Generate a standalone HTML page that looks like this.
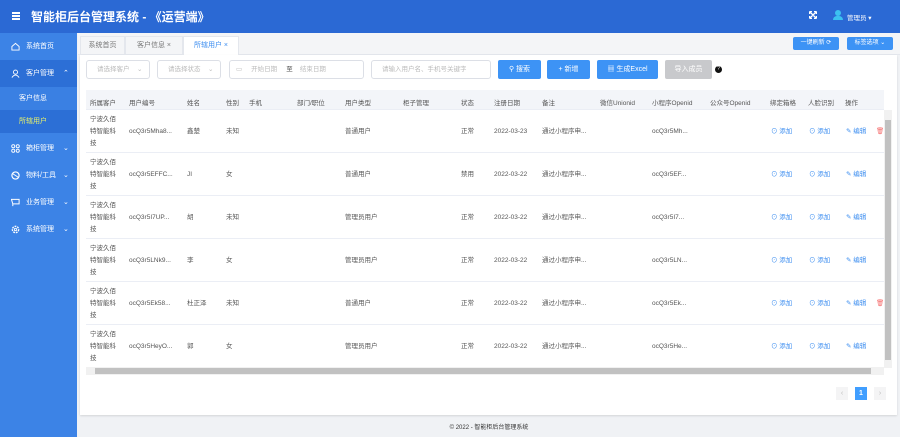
<!DOCTYPE html>
<html><head><meta charset="utf-8"><style>
*{margin:0;padding:0;box-sizing:border-box}
body{width:900px;height:437px;overflow:hidden;background:#f0f2f5;font-family:"Liberation Sans","Noto Sans CJK SC",sans-serif;font-size:7px;color:#555;position:relative}
.a{position:absolute}
.hdr{left:0;top:0;width:900px;height:33px;background:#2b69d4}
.side{left:0;top:33px;width:77px;height:404px;background:#3c83e6}
.si{position:absolute;left:0;width:77px;height:27px;color:#fff;font-size:7px;line-height:27px;padding-left:26px}
.ic{position:absolute;left:11px;top:9px;width:9px;height:9px}
.chev{position:absolute;left:63px;top:0;font-size:7px}
.btn{position:absolute;height:18px;border-radius:2px;background:#3d93f5;color:#fff;font-size:7px;line-height:18px;text-align:center}
.inp{position:absolute;top:60px;height:19px;border:1px solid #dcdfe6;border-radius:3px;background:#fff;color:#bbb;font-size:6.5px;line-height:17px;padding-left:10px}
.th{position:absolute;top:97px;font-size:6.5px;color:#555}
.row{position:absolute;left:86px;width:798px;height:43px;border-bottom:1px solid #ebeef5;background:#fff}
.c{position:absolute;font-size:6.5px;color:#555;line-height:12px}
.lk{color:#3d8ef0}
</style></head><body>
<div class="a hdr"></div>
<div class="a" style="left:12px;top:12px;width:8px;height:1.5px;background:#fff;box-shadow:0 3px 0 #fff,0 6px 0 #fff"></div>
<div class="a" style="left:31px;top:8px;color:#fff;font-size:12px;font-weight:bold">智能柜后台管理系统 - 《运营端》</div>
<svg class="a" style="left:809px;top:11px" width="8" height="8" viewBox="0 0 8 8"><path d="M0.5 0.5L7.5 7.5M7.5 0.5L0.5 7.5M0.5 0.5H3M0.5 0.5V3M7.5 0.5H5M7.5 0.5V3M0.5 7.5H3M0.5 7.5V5M7.5 7.5H5M7.5 7.5V5" stroke="#fff" stroke-width="1.3" fill="none"/></svg>
<div class="a" style="left:835px;top:10px;width:6px;height:6px;border-radius:50%;background:#3cc1f0"></div>
<div class="a" style="left:833px;top:16px;width:10px;height:4px;border-radius:4px 4px 0 0;background:#3cc1f0"></div>
<div class="a" style="left:847px;top:12px;color:#fff;font-size:6.5px">管理员 ▾</div>

<div class="a side">
<div class="si" style="top:0">系统首页<svg class="ic" viewBox="0 0 10 10"><path d="M1 5L5 1.5 9 5V9H1z" fill="none" stroke="#fff" stroke-width="1"/></svg></div>
<div class="si" style="top:27px;background:#2c6fd6">客户管理<svg class="ic" viewBox="0 0 10 10"><circle cx="5" cy="3.5" r="2.3" fill="none" stroke="#fff"/><path d="M1 9.5Q5 4 9 9.5" fill="none" stroke="#fff"/></svg><span class="chev">⌃</span></div>
<div class="si" style="top:54px;height:23px;line-height:23px;padding-left:19px;background:#3a80e3">客户信息</div>
<div class="si" style="top:77px;height:23px;line-height:23px;padding-left:19px;background:#2c6fd6;color:#e8f26a">所辖用户</div>
<div class="si" style="top:102px">箱柜管理<svg class="ic" viewBox="0 0 10 10"><g fill="none" stroke="#fff"><circle cx="2.5" cy="2.5" r="1.7"/><circle cx="7.5" cy="2.5" r="1.7"/><circle cx="2.5" cy="7.5" r="1.7"/><circle cx="7.5" cy="7.5" r="1.7"/></g></svg><span class="chev">⌄</span></div>
<div class="si" style="top:129px">物料/工具<svg class="ic" viewBox="0 0 10 10"><circle cx="5" cy="5" r="4" fill="none" stroke="#fff" stroke-width="1.3"/><path d="M2 3L8 7" stroke="#fff"/></svg><span class="chev">⌄</span></div>
<div class="si" style="top:156px">业务管理<svg class="ic" viewBox="0 0 10 10"><path d="M0.5 1.5H9V6.5H2z M2 6.5V9" fill="none" stroke="#fff" stroke-width="1.1"/></svg><span class="chev">⌄</span></div>
<div class="si" style="top:183px">系统管理<svg class="ic" viewBox="0 0 10 10"><circle cx="5" cy="5" r="3.5" fill="none" stroke="#fff" stroke-width="1.5" stroke-dasharray="2 1"/><circle cx="5" cy="5" r="1.3" fill="none" stroke="#fff"/></svg><span class="chev">⌄</span></div>
</div>

<div class="a" style="left:78px;top:33px;width:822px;height:22px;background:#f4f5f7;border-bottom:1px solid #e4e7ed"></div>
<div class="a" style="left:80px;top:36px;width:45px;height:19px;border:1px solid #e4e7ed;background:#f4f5f7;color:#777;line-height:17px;text-align:center">系统首页</div>
<div class="a" style="left:125px;top:36px;width:58px;height:19px;border:1px solid #e4e7ed;background:#f4f5f7;color:#777;line-height:17px;text-align:center">客户信息 ×</div>
<div class="a" style="left:183px;top:36px;width:56px;height:20px;border:1px solid #e4e7ed;border-bottom:none;background:#fff;color:#3d8ef0;line-height:17px;text-align:center">所辖用户 ×</div>
<div class="btn" style="left:793px;top:37px;width:46px;height:13px;line-height:13px;font-size:6px">一键刷新 ⟳</div>
<div class="btn" style="left:847px;top:37px;width:46px;height:13px;line-height:13px;font-size:6px">标签选项 ⌄</div>

<div class="a" style="left:80px;top:55px;width:817px;height:360px;background:#fff;box-shadow:0 1px 2px rgba(0,0,0,.12)"></div>
<div class="inp" style="left:86px;width:64px">请选择客户 <span style="position:absolute;left:50px">⌄</span></div>
<div class="inp" style="left:157px;width:64px">请选择状态 <span style="position:absolute;left:50px">⌄</span></div>
<div class="inp" style="left:229px;width:135px;padding-left:6px">▭ &nbsp;&nbsp;&nbsp;&nbsp;开始日期 &nbsp;&nbsp;&nbsp;&nbsp;<span style="color:#555">至</span> &nbsp;&nbsp;&nbsp;结束日期</div>
<div class="inp" style="left:371px;width:120px">请输入用户名、手机号关键字</div>
<div class="btn" style="left:498px;top:60px;width:43px;height:19px;line-height:19px">⚲ 搜索</div>
<div class="btn" style="left:547px;top:60px;width:43px;height:19px;line-height:19px">+ 新增</div>
<div class="btn" style="left:597px;top:60px;width:61px;height:19px;line-height:19px">▦ 生成Excel</div>
<div class="btn" style="left:665px;top:60px;width:47px;height:19px;line-height:19px;background:#c8c9cc">导入成员</div>
<div class="a" style="left:715px;top:66px;width:7px;height:7px;border-radius:50%;background:#111;color:#fff;font-size:5px;line-height:7px;text-align:center">?</div>

<div class="a" style="left:86px;top:90px;width:798px;height:20px;background:#f3f5f9;border-bottom:1px solid #ebeef5"></div>
<div class="th" style="left:90px">所属客户</div><div class="th" style="left:129px">用户编号</div><div class="th" style="left:187px">姓名</div><div class="th" style="left:226px">性别</div><div class="th" style="left:249px">手机</div><div class="th" style="left:297px">部门/职位</div><div class="th" style="left:345px">用户类型</div><div class="th" style="left:403px">柜子管理</div><div class="th" style="left:461px">状态</div><div class="th" style="left:494px">注册日期</div><div class="th" style="left:542px">备注</div><div class="th" style="left:600px">微信Unionid</div><div class="th" style="left:652px">小程序Openid</div><div class="th" style="left:710px">公众号Openid</div><div class="th" style="left:770px">绑定箱格</div><div class="th" style="left:808px">人脸识别</div><div class="th" style="left:845px">操作</div>

<div id="rows"></div>
<script>
var d=[["ocQ3r5Mha8...","鑫楚","未知","普通用户","正常","2022-03-23","通过小程序申...","ocQ3r5Mh...",1],
["ocQ3r5EFFC...","JI","女","普通用户","禁用","2022-03-22","通过小程序申...","ocQ3r5EF...",0],
["ocQ3r5I7UP...","胡","未知","管理员用户","正常","2022-03-22","通过小程序申...","ocQ3r5I7...",0],
["ocQ3r5LNk9...","李","女","管理员用户","正常","2022-03-22","通过小程序申...","ocQ3r5LN...",0],
["ocQ3r5Ek58...","杜正泽","未知","普通用户","正常","2022-03-22","通过小程序申...","ocQ3r5Ek...",1],
["ocQ3r5HeyO...","郭","女","管理员用户","正常","2022-03-22","通过小程序申...","ocQ3r5He...",0]];
var h="";
d.forEach(function(r,i){var t=110+i*43;
h+='<div class="row" style="top:'+t+'px"></div>';
h+='<div class="c" style="left:90px;top:'+(t+4)+'px">宁波久佰<br>特智能科<br>技</div>';
var y=t+16,p=[[129,r[0]],[187,r[1]],[226,r[2]],[345,r[3]],[461,r[4]],[494,r[5]],[542,r[6]],[652,r[7]]];
p.forEach(function(q){h+='<div class="c" style="left:'+q[0]+'px;top:'+y+'px">'+q[1]+'</div>'});
h+='<div class="c lk" style="left:771px;top:'+y+'px">⊙ 添加</div><div class="c lk" style="left:809px;top:'+y+'px">⊙ 添加</div><div class="c lk" style="left:846px;top:'+y+'px">✎ 编辑</div>';
if(r[8])h+='<div class="c" style="left:876px;top:'+y+'px;color:#f56c6c">🗑</div>';});
document.getElementById("rows").innerHTML=h;
</script>
<div class="a" style="left:884px;top:110px;width:8px;height:258px;background:#f1f1f1"></div>
<div class="a" style="left:885px;top:120px;width:6px;height:240px;background:#c1c1c1"></div>
<div class="a" style="left:86px;top:367px;width:798px;height:8px;background:#f1f1f1"></div>
<div class="a" style="left:95px;top:368px;width:776px;height:6px;background:#c1c1c1"></div>
<div class="a" style="left:836px;top:387px;width:12px;height:13px;background:#f4f4f5;color:#bbb;text-align:center;line-height:13px">‹</div>
<div class="a" style="left:855px;top:387px;width:12px;height:13px;background:#409eff;color:#fff;text-align:center;line-height:13px;font-weight:bold">1</div>
<div class="a" style="left:874px;top:387px;width:12px;height:13px;background:#f4f4f5;color:#bbb;text-align:center;line-height:13px">›</div>
<div class="a" style="left:78px;top:422px;width:822px;text-align:center;font-size:6px;color:#333">© 2022 - 智能柜后台管理系统</div>
</body></html>
